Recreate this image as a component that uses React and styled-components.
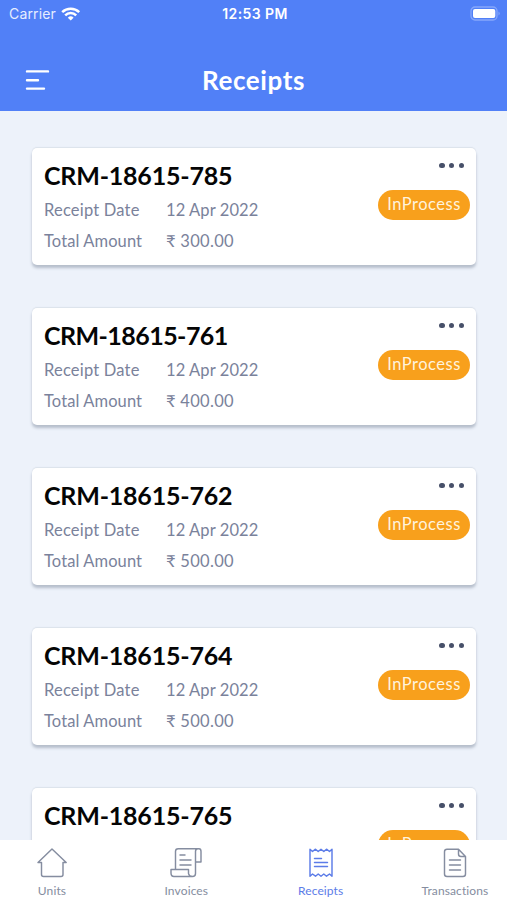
import styled, { createGlobalStyle } from 'styled-components';

const GlobalStyle = createGlobalStyle`
    body{
        margin: 0;
        overflow: hidden;
        background: #EDF2FA;
    }
    *{
        box-sizing: border-box;
    }
`;

const StyledScreen = styled.div`
    display: flex;
    flex-direction: column;
    width: 507px;
    height: 900px;
    overflow: hidden;
    font-family: Lato, 'Open Sans', sans-serif;
    background: #EDF2FA;
`;

const StyledHeader = styled.header`
    flex: none;
    height: 111px;
    color: #FFFFFF;
    background: #5180F7;
`;

const StyledStatusBar = styled.div`
    display: grid;
    grid-template-columns: 1fr auto 1fr;
    align-items: center;
    height: 27px;
    padding: 0 6px 0 9px;
    font-family: Inter, sans-serif;
    font-size: 14px;
`;

const StyledCarrier = styled.div`
    display: flex;
    align-items: center;
    gap: 5px;
    letter-spacing: 0.15px;
    color: #E6EDFF;
`;

const StyledClock = styled.div`
    font-weight: 600;
    font-size: 14px;
    letter-spacing: 0.4px;
`;

const StyledBattery = styled.div`
    display: flex;
    justify-content: flex-end;
`;

const StyledTitleBar = styled.div`
    display: grid;
    grid-template-columns: 1fr auto 1fr;
    align-items: center;
    height: 84px;
    padding: 22px 24px 0;
`;

const StyledTitle = styled.h1`
    margin: 0;
    font-size: 26px;
    font-weight: 700;
    line-height: 32px;
    letter-spacing: 0.6px;
`;

const StyledList = styled.main`
    flex: 1;
    display: flex;
    flex-direction: column;
    gap: 43px;
    min-height: 0;
    padding: 37px 31px 0 32px;
    overflow: hidden;
`;

const StyledCard = styled.article`
    flex: none;
    display: flex;
    justify-content: space-between;
    height: 117px;
    padding: 11px 6px 0 12px;
    border-radius: 5px;
    background: #FFFFFF;
    box-shadow: 0 3px 3px rgba(70, 85, 110, 0.33), 0 -1px 1px rgba(70, 85, 110, 0.1);
`;

const StyledNumber = styled.h2`
    margin: 0 0 4px;
    font-size: 25px;
    font-weight: 700;
    line-height: 32px;
    letter-spacing: ${props => props.$spacing};
    color: #050505;
`;

const StyledRow = styled.div`
    display: grid;
    grid-template-columns: 122px auto;
    height: 30.5px;
    font-size: 16.5px;
    line-height: 30px;
    color: #7A829B;
`;

const StyledLabel = styled.span`
    letter-spacing: ${props => props.$spacing};
`;

const StyledActions = styled.div`
    display: flex;
    flex-direction: column;
    align-items: flex-end;
`;

const StyledDots = styled.div`
    display: flex;
    gap: 4.2px;
    padding: 3.7px 6px 0 0;
    i{
        width: 5.4px;
        height: 5.4px;
        border-radius: 50%;
        background: #475069;
    }
`;

const StyledStatus = styled.div`
    width: 92px;
    height: 30px;
    margin-top: 22px;
    border-radius: 15px;
    font-size: 16.5px;
    line-height: 29px;
    letter-spacing: 0.5px;
    text-align: center;
    color: #FFF3DC;
    background: #F8A01C;
`;

const StyledTabBar = styled.nav`
    flex: none;
    display: flex;
    justify-content: space-between;
    height: 60px;
    padding: 0 10px;
    background: #FFFFFF;
`;

const StyledTab = styled.div`
    display: flex;
    flex-direction: column;
    align-items: center;
    width: 84px;
    padding-top: 7px;
    font-size: 12px;
    line-height: 16px;
    letter-spacing: 0.12px;
    color: ${props => props.$active ? "#5C7CE8" : "#858DA0"};
    svg{
        margin-bottom: 4px;
    }
`;

const receipts = [
    { number: "CRM-18615-785", date: "12 Apr 2022", amount: "₹ 300.00", spacing: "-0.2px" },
    { number: "CRM-18615-761", date: "12 Apr 2022", amount: "₹ 400.00", spacing: "-0.55px" },
    { number: "CRM-18615-762", date: "12 Apr 2022", amount: "₹ 500.00", spacing: "-0.2px" },
    { number: "CRM-18615-764", date: "12 Apr 2022", amount: "₹ 500.00", spacing: "-0.2px" },
    { number: "CRM-18615-765", date: "12 Apr 2022", amount: "₹ 500.00", spacing: "-0.2px" },
]

const TabIcon = ({children}) => {
    return(
        <svg width="34" height="32" viewBox="0 0 34 32" fill="none" stroke="currentColor" strokeWidth="1.45" strokeLinejoin="round" strokeLinecap="round">
            {children}
        </svg>
    );
}

const tabs = [
    {
        title: "Units",
        icon: <path d="M17 2 3 15.5H6.5V27.5Q6.5 29.5 8.5 29.5H26Q28 29.5 28 27.5V15.5H31.2Z" />
    },
    {
        title: "Invoices",
        icon: <path d="M6.5 22.5V4.5Q6.5 1.8 9.2 1.8H30Q32 1.8 32 4.5V15H26.5V4.5Q26.5 1.8 29 1.8M26.5 15V26.5Q26.5 29.5 23.5 29.5H5Q2 29.5 2 26V22.5H19.5V26.5Q20 29.5 23.5 29.5M11 8H16M11 13H22M11 18H22" />
    },
    {
        title: "Receipts",
        icon: <path d="M6 2.2 8.5 4.5 11.5 2.2 14.2 4.5 17 2.2 19.8 4.5 22.5 2.2 25.5 4.5 28 2.2V29.2L25.5 27 22.5 29.2 19.8 27 17 29.2 14.2 27 11.5 29.2 8.5 27 6 29.2ZM10.5 11.5H17.5M10.5 15.5H23.5M10.5 19.5H23.5" />
    },
    {
        title: "Transactions",
        icon: <path d="M9 2.2H20.5L27.5 9.5V27Q27.5 29.5 25 29.5H9Q6.5 29.5 6.5 27V4.7Q6.5 2.2 9 2.2ZM20.5 2.2V7Q20.5 9.5 23 9.5H27.5M11.5 13H22.5M11.5 18H22.5M11.5 23H22.5" />
    },
]

const StatusBar = () => {
    return(
        <StyledStatusBar>
            <StyledCarrier>
                Carrier
                <svg width="20" height="14" viewBox="0 0 20 14" fill="none" stroke="#FFFFFF" strokeWidth="2.5">
                    <path d="M1.2 5.1A12.3 12.3 0 0 1 18.2 5.1M4.2 8.3A7.8 7.8 0 0 1 15.2 8.3" />
                    <path d="M9.7 13.6 6.8 10.8A4.1 4.1 0 0 1 12.6 10.8Z" fill="#FFFFFF" stroke="none" />
                </svg>
            </StyledCarrier>
            <StyledClock>12:53 PM</StyledClock>
            <StyledBattery>
                <svg width="31" height="15" viewBox="0 0 31 15">
                    <rect x="1" y="1" width="26" height="13" rx="4" fill="none" stroke="#86A7FB" strokeWidth="1.3" />
                    <rect x="3" y="3" width="22.3" height="9" rx="2" fill="#FFFFFF" />
                    <path d="M28.5 5.5Q31 7.5 28.5 9.5Z" fill="#86A7FB" />
                </svg>
            </StyledBattery>
        </StyledStatusBar>
    );
}

const Receipt = ({number, date, amount, spacing}) => {
    return(
        <StyledCard>
            <div>
                <StyledNumber $spacing={spacing}>{number}</StyledNumber>
                <StyledRow>
                    <StyledLabel $spacing="0.2px">Receipt Date</StyledLabel>
                    <StyledLabel $spacing="0.1px">{date}</StyledLabel>
                </StyledRow>
                <StyledRow>
                    <StyledLabel $spacing="0.1px">Total Amount</StyledLabel>
                    <StyledLabel $spacing="0.3px">{amount}</StyledLabel>
                </StyledRow>
            </div>
            <StyledActions>
                <StyledDots><i /><i /><i /></StyledDots>
                <StyledStatus>InProcess</StyledStatus>
            </StyledActions>
        </StyledCard>
    );
}

const App = () => {
    return (
        <StyledScreen>
            <GlobalStyle />
            <StyledHeader>
                <StatusBar />
                <StyledTitleBar>
                    <svg width="26" height="22" viewBox="0 0 26 22" stroke="#FFFFFF" strokeWidth="2.4" strokeLinecap="round">
                        <path d="M3 2.4H24M3 11.2H14M3 19.6H20" />
                    </svg>
                    <StyledTitle>Receipts</StyledTitle>
                </StyledTitleBar>
            </StyledHeader>
            <StyledList>
                {receipts.map((item) => <Receipt key={item.number} {...item} />)}
            </StyledList>
            <StyledTabBar>
                {tabs.map((item) => (
                    <StyledTab key={item.title} $active={item.title === "Receipts"}>
                        <TabIcon>{item.icon}</TabIcon>
                        {item.title}
                    </StyledTab>
                ))}
            </StyledTabBar>
        </StyledScreen>
    );
}

export default App;
